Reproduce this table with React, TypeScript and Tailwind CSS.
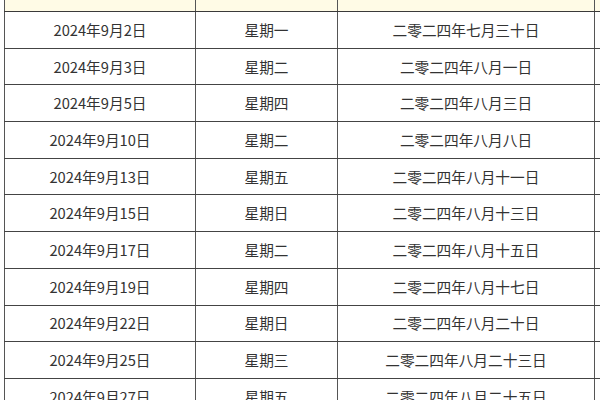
const ROWS: [string, string, string][] = [
  ["2024年9月2日", "星期一", "二零二四年七月三十日"],
  ["2024年9月3日", "星期二", "二零二四年八月一日"],
  ["2024年9月5日", "星期四", "二零二四年八月三日"],
  ["2024年9月10日", "星期二", "二零二四年八月八日"],
  ["2024年9月13日", "星期五", "二零二四年八月十一日"],
  ["2024年9月15日", "星期日", "二零二四年八月十三日"],
  ["2024年9月17日", "星期二", "二零二四年八月十五日"],
  ["2024年9月19日", "星期四", "二零二四年八月十七日"],
  ["2024年9月22日", "星期日", "二零二四年八月二十日"],
  ["2024年9月25日", "星期三", "二零二四年八月二十三日"],
  ["2024年9月27日", "星期五", "二零二四年八月二十五日"],
];

export default function App() {
  return (
    <div className="h-[400px] w-[600px] overflow-hidden bg-white pl-[4px] font-['Noto_Sans_CJK_SC',sans-serif] text-[14.7px] text-[#333]">
      {/* header row, only its lower edge is in view */}
      <div className="grid h-[12px] grid-cols-[191px_142px_258px] border-b border-[#3a3a3a] bg-[#fffbe6]">
        <div className="border-l border-[#555]" />
        <div className="border-l border-[#555]" />
        <div className="border-x border-[#555]" />
      </div>
      {ROWS.map((r, i) => (
        <div
          key={i}
          className="grid h-[36.7px] grid-cols-[191px_142px_258px] border-b border-[#444]"
        >
          <div className="flex items-center justify-center border-l border-[#555]">{r[0]}</div>
          <div className="flex items-center justify-center border-l border-[#555]">{r[1]}</div>
          <div className="flex items-center justify-center border-x border-[#555]">{r[2]}</div>
        </div>
      ))}
    </div>
  );
}
